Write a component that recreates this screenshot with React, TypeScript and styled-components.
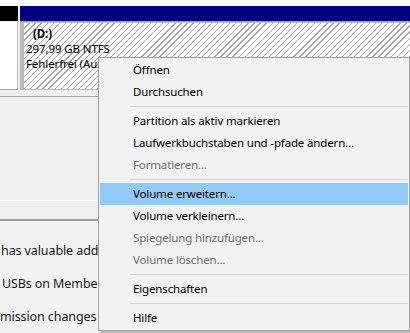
import React from "react";
import styled, { createGlobalStyle } from "styled-components";

const GlobalStyle = createGlobalStyle`
  html, body { margin: 0; padding: 0; background: #f0f0f0; }
  body { font-family: "Segoe UI", "Noto Sans", "Open Sans", sans-serif; }
`;

const Page = styled.div`
  position: relative;
  width: 410px;
  height: 333px;
  overflow: hidden;
  background: #f0f0f0;
  display: flex;
  flex-direction: column;
`;

const TopStrip = styled.div`
  height: 6px;
  background: #fbfbfb;
`;

const DiskRow = styled.div`
  display: flex;
  height: 85px;
  gap: 2px;
  background: #f0f0f0;
`;

const Column = styled.div<{ $w?: number }>`
  display: flex;
  flex-direction: column;
  ${(p) => (p.$w ? `width: ${p.$w}px; flex: none;` : "flex: 1;")}
`;

const HeaderBar = styled.div<{ $color: string }>`
  height: 15px;
  background: ${(p) => p.$color};
  flex: none;
`;

const LabelBody = styled.div`
  flex: 1;
  margin-top: 1px;
  background: #fff;
  border-right: 1px solid #b8b8b8;
  border-bottom: 1px solid #a8a8a8;
`;

const PartitionFrame = styled.div`
  flex: 1;
  background: #b9b9b9;
  border-top: 1px solid #a6a6a6;
  padding: 1px 0 1px 4px;
  display: flex;
`;

const Hatched = styled.div`
  flex: 1;
  background-color: #fff;
  background-image: repeating-linear-gradient(
    135deg,
    transparent 0px,
    transparent 3.4px,
    #a4a4a4 3.4px,
    #a4a4a4 4.3px
  );
  padding: 3px 0 0 2px;
  font-size: 11.5px;
  letter-spacing: -0.1px;
  line-height: 15px;
  color: #000;
  white-space: nowrap;
  overflow: hidden;
`;

const VolLine = styled.div<{ $bold?: boolean; $indent?: number }>`
  font-weight: ${(p) => (p.$bold ? 700 : 400)};
  padding-left: ${(p) => p.$indent ?? 0}px;
`;

const Rule = styled.div<{ $color: string; $mt: number; $h?: number }>`
  height: ${(p) => p.$h ?? 1}px;
  margin-top: ${(p) => p.$mt}px;
  background: ${(p) => p.$color};
  flex: none;
`;

const BottomPanel = styled.div`
  flex: 1;
  background: #f2f2f2;
  padding-top: 12px;
  font-size: 12.5px;
  letter-spacing: -0.1px;
  line-height: 33px;
  color: #1a1a1a;
  white-space: nowrap;
`;

const TextRow = styled.div<{ $indent: number }>`
  padding-left: ${(p) => p.$indent}px;
`;

const Menu = styled.div`
  position: absolute;
  left: 98px;
  top: 57px;
  width: 308px;
  padding: 1px 1px;
  background: #f2f2f2;
  border: 1px solid #a0a0a0;
  box-shadow: 2px 2px 2px rgba(0, 0, 0, 0.28);
  font-size: 11.5px;
  letter-spacing: -0.15px;
  display: flex;
  flex-direction: column;
`;

const Item = styled.div<{ $disabled?: boolean; $active?: boolean }>`
  height: 22px;
  line-height: 22px;
  padding-left: 33px;
  color: ${(p) => (p.$disabled ? "#6d6d6d" : "#000")};
  background: ${(p) => (p.$active ? "#91c9f7" : "transparent")};
  white-space: nowrap;
`;

const Separator = styled.div`
  height: 1px;
  margin: 3px 0 3px 30px;
  background: #d4d4d4;
`;

type Entry = { label?: string; disabled?: boolean; active?: boolean; sep?: boolean };

const entries: Entry[] = [
  { label: "Öffnen" },
  { label: "Durchsuchen" },
  { sep: true },
  { label: "Partition als aktiv markieren" },
  { label: "Laufwerkbuchstaben und -pfade ändern..." },
  { label: "Formatieren...", disabled: true },
  { sep: true },
  { label: "Volume erweitern...", active: true },
  { label: "Volume verkleinern..." },
  { label: "Spiegelung hinzufügen...", disabled: true },
  { label: "Volume löschen...", disabled: true },
  { sep: true },
  { label: "Eigenschaften" },
  { sep: true },
  { label: "Hilfe" },
];

export default function App() {
  return (
    <>
      <GlobalStyle />
      <Page>
        <TopStrip />
        <DiskRow>
          <Column $w={18}>
            <HeaderBar $color="#000" />
            <LabelBody />
          </Column>
          <Column>
            <HeaderBar $color="#000080" />
            <PartitionFrame>
              <Hatched>
                <VolLine $bold $indent={7}>(D:)</VolLine>
                <VolLine>297,99 GB NTFS</VolLine>
                <VolLine>Fehlerfrei (Auslagerungsdatei, Primäre Partition)</VolLine>
              </Hatched>
            </PartitionFrame>
          </Column>
        </DiskRow>
        <Rule $color="#a3a3a3" $mt={6} />
        <Rule $color="#ffffff" $mt={103} />
        <Rule $color="#9a9a9a" $mt={18} $h={2} />
        <Rule $color="#ffffff" $mt={0} />
        <BottomPanel>
          <TextRow $indent={1}>has valuable additions</TextRow>
          <TextRow $indent={2}>USBs on Members</TextRow>
          <TextRow $indent={0}>mission changes</TextRow>
        </BottomPanel>
        <Menu>
          {entries.map((e, i) =>
            e.sep ? (
              <Separator key={i} />
            ) : (
              <Item key={i} $disabled={e.disabled} $active={e.active}>
                {e.label}
              </Item>
            )
          )}
        </Menu>
      </Page>
    </>
  );
}
